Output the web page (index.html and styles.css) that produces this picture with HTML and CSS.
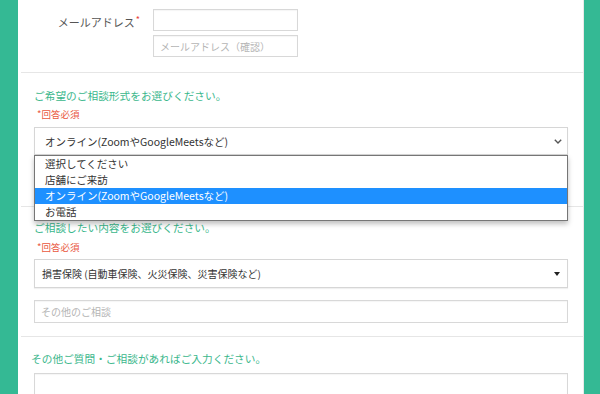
FILE: index.html
```html
<!DOCTYPE html>
<html lang="ja">
<head>
<meta charset="utf-8">
<link rel="stylesheet" href="styles.css">
</head>
<body>
<div class="panel">
  <div class="email-row">
    <div class="email-label">メールアドレス<span class="req-star">*</span></div>
    <div class="email-inputs">
      <input class="field small" type="text">
      <input class="field small" type="text" placeholder="メールアドレス（確認）">
    </div>
  </div>

  <section class="block first">
    <p class="q">ご希望のご相談形式をお選びください。</p>
    <p class="must">*回答必須</p>
    <div class="select-wrap">
      <div class="select sel1">
        <span>オンライン(ZoomやGoogleMeetsなど)</span>
        <svg class="chev" width="8" height="5" viewBox="0 0 8 5"><path d="M0.8 0.8 L4 4 L7.2 0.8" fill="none" stroke="#555" stroke-width="1.4"/></svg>
      </div>
      <ul class="popup">
        <li>選択してください</li>
        <li>店舗にご来訪</li>
        <li class="active">オンライン(ZoomやGoogleMeetsなど)</li>
        <li>お電話</li>
      </ul>
    </div>
  </section>

  <section class="block second">
    <p class="q">ご相談したい内容をお選びください。</p>
    <p class="must">*回答必須</p>
    <div class="select sel2">
      <span>損害保険 (自動車保険、火災保険、災害保険など)</span>
      <svg class="tri" width="6" height="4" viewBox="0 0 6 4"><path d="M0 0 H6 L3 4 Z" fill="#222"/></svg>
    </div>
    <input class="field wide" type="text" placeholder="その他のご相談">
  </section>

  <section class="block third">
    <p class="q">その他ご質問・ご相談があればご入力ください。</p>
    <textarea class="field area"></textarea>
  </section>
</div>
</body>
</html>
```

FILE: styles.css
```css
* { box-sizing: border-box; }
html, body {
  margin: 0;
  padding: 0;
  height: 394px;
  overflow: hidden;
}
body {
  background: #34b994;
  font-family: "Noto Sans CJK JP", "Noto Sans", sans-serif;
  font-size: 10.5px;
  color: #444;
}
.panel {
  margin: 0 16px 0 18px;
  background: #fff;
  height: 394px;
  overflow: hidden;
  border-right: 1px solid #e9e9e9;
}
.email-row {
  display: flex;
  gap: 13px;
  padding-top: 9px;
  padding-bottom: 15px;
  border-bottom: 1px solid #e6e6e6;
  margin-left: 3px;
}
.email-label {
  width: 119px;
  text-align: right;
  line-height: 22px;
  font-size: 11px;
  color: #555;
}
.req-star {
  color: #e8413a;
  font-size: 9px;
  vertical-align: 4px;
  margin-left: 1px;
}
.email-inputs {
  display: flex;
  flex-direction: column;
  gap: 4px;
}
.field {
  display: block;
  border: 1px solid #d8d8d8;
  background: #fff;
  box-shadow: inset 0 1px 1px rgba(0,0,0,0.04);
  font-family: inherit;
  font-size: 10px;
  color: #444;
  outline: none;
  margin: 0;
}
.field::placeholder { color: #b5b5b5; }
.field.small {
  width: 145px;
  height: 22px;
  padding: 0 6px;
}
.block {
  padding: 0 15px 0 13px;
  margin-left: 3px;
}
.block.first {
  padding-top: 16px;
  padding-bottom: 51px;
  border-bottom: 1px solid #e6e6e6;
}
.block.second {
  padding-top: 14px;
  padding-bottom: 13px;
  border-bottom: 1px solid #e6e6e6;
}
.block.third {
  padding-top: 15px;
}
.q {
  margin: 0;
  line-height: 14px;
  font-size: 10.7px;
  color: #3bb78c;
}
.third .q { margin-left: -3px; }
.must {
  margin: 4px 0 0 3px;
  line-height: 14px;
  font-size: 9.5px;
  color: #e9573e;
}
.second .must { margin-top: 5px; }
.select-wrap {
  position: relative;
  margin-top: 6px;
}
.select {
  display: flex;
  align-items: center;
  justify-content: space-between;
  background: #fff;
  border: 1px solid #d6d6d6;
  box-shadow: 0 1px 1px rgba(0,0,0,0.06);
  color: #333;
  font-size: 10.5px;
}
.sel1 {
  height: 28px;
  padding: 0 5px 0 10px;
}
.sel2 {
  height: 29px;
  margin-top: 5px;
  padding: 0 7px 0 7px;
  font-size: 10px;
}
.popup {
  position: absolute;
  top: 100%;
  left: 0;
  right: 0;
  margin: 0;
  padding: 0;
  list-style: none;
  background: #fff;
  border: 1px solid #767676;
  box-shadow: 0 3px 5px rgba(0,0,0,0.25);
  z-index: 5;
}
.popup li {
  height: 16px;
  line-height: 16px;
  padding-left: 10px;
  font-size: 10.5px;
  color: #333;
}
.popup li.active {
  background: #1e90ff;
  color: #fff;
}
.field.wide {
  width: 100%;
  height: 23px;
  margin-top: 12px;
  padding: 0 6px;
}
.field.area {
  width: 100%;
  height: 40px;
  margin-top: 7px;
  resize: none;
}
```
